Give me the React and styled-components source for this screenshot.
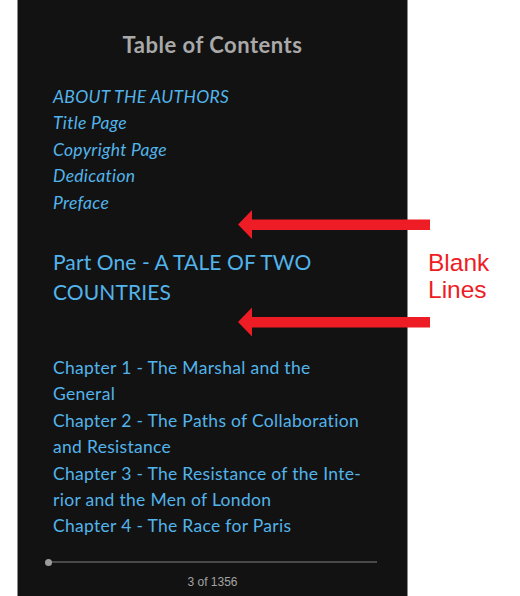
import React from 'react';
import styled, { createGlobalStyle } from 'styled-components';

const GlobalStyle = createGlobalStyle`
  html, body {
    margin: 0;
    padding: 0;
    background: #ffffff;
  }
  body {
    font-family: Lato, "Open Sans", sans-serif;
  }
`;

const Page = styled.div`
  position: relative;
  width: 520px;
  height: 596px;
  overflow: hidden;
`;

const Reader = styled.div`
  box-sizing: border-box;
  margin-left: 17px;
  width: 391px;
  height: 596px;
  background: #121212;
  border-left: 1px solid #8a8a8a;
  border-right: 1px solid #8a8a8a;
  display: flex;
  flex-direction: column;
  padding: 32px 45px 0 35px;
`;

const Title = styled.h1`
  margin: 0 0 26px 0;
  padding-left: 10px;
  font-size: 22px;
  line-height: 26px;
  font-weight: 700;
  letter-spacing: 0.5px;
  color: #a9a9a9;
  text-align: center;
`;

const Entry = styled.div`
  font-size: ${props => (props.large ? '21px' : '17.5px')};
  line-height: ${props => (props.large ? '30px' : '26.4px')};
  letter-spacing: ${props => (props.large ? '0.1px' : '0.3px')};
  font-style: ${props => (props.italic ? 'italic' : 'normal')};
  color: #52b4ea;
  hyphens: manual;
`;

const Group = styled.div`
  margin-top: ${props => props.gap || 0}px;
`;

const Footer = styled.div`
  margin-top: auto;
  display: flex;
  flex-direction: column;
  align-items: stretch;
  padding-bottom: 7px;
`;

const Track = styled.div`
  position: relative;
  margin: 0 -15px 0 -5px;
  height: 2px;
  background: #4a4a4a;
`;

const Knob = styled.span`
  position: absolute;
  left: -3.5px;
  top: -2.5px;
  width: 7px;
  height: 7px;
  border-radius: 50%;
  background: #9c9c9c;
`;

const PageCount = styled.div`
  margin-top: 12px;
  padding-left: 10px;
  text-align: center;
  font-family: "Liberation Sans", Arial, sans-serif;
  font-size: 12px;
  line-height: 14px;
  color: #a3a3a3;
`;

const Arrows = styled.svg`
  position: absolute;
  left: 0;
  top: 0;
  pointer-events: none;
`;

const Label = styled.div`
  position: absolute;
  left: 428px;
  top: 249px;
  font-family: "Liberation Sans", Arial, sans-serif;
  font-size: 24.5px;
  line-height: 27px;
  color: #ee1c25;
`;

const Arrow = ({ y }) => (
  <polygon
    fill="#ee1c25"
    points={`238,${y} 252,${y - 14.5} 252,${y - 5} 430,${y - 5} 430,${y + 5.5} 252,${y + 5.5} 252,${y + 14.5}`}
  />
);

const front = ['ABOUT THE AUTHORS', 'Title Page', 'Copyright Page', 'Dedication', 'Preface'];

const chapters = [
  'Chapter 1 - The Marshal and the General',
  'Chapter 2 - The Paths of Collaboration and Resistance',
  'Chapter 3 - The Resistance of the Inte\u00ADrior and the Men of London',
  'Chapter 4 - The Race for Paris',
];

export default function App() {
  return (
    <>
      <GlobalStyle />
      <Page>
        <Reader>
          <Title>Table of Contents</Title>
          <Group>
            {front.map(t => (
              <Entry italic key={t}>{t}</Entry>
            ))}
          </Group>
          <Group gap={31}>
            <Entry large>Part One - A TALE OF TWO COUNTRIES</Entry>
          </Group>
          <Group gap={48}>
            {chapters.map(t => (
              <Entry key={t}>{t}</Entry>
            ))}
          </Group>
          <Footer>
            <Track>
              <Knob />
            </Track>
            <PageCount>3 of 1356</PageCount>
          </Footer>
        </Reader>
        <Arrows width="520" height="596" viewBox="0 0 520 596">
          <Arrow y={224.5} />
          <Arrow y={322} />
        </Arrows>
        <Label>
          Blank
          <br />
          Lines
        </Label>
      </Page>
    </>
  );
}
